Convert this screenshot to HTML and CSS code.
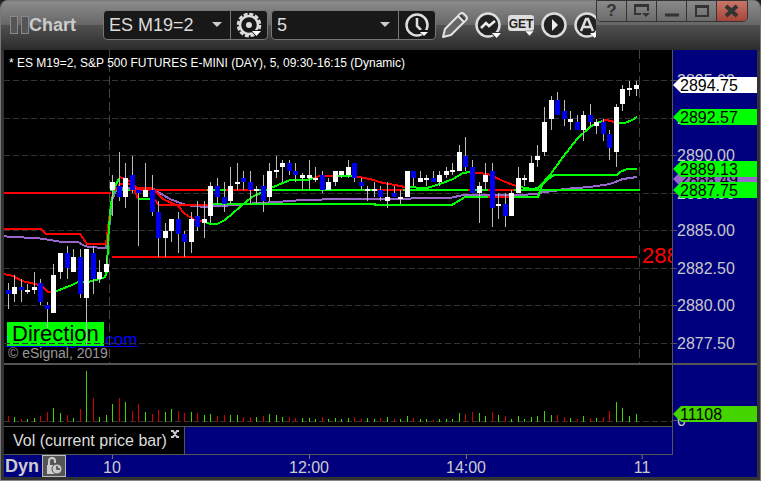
FILE: index.html
```html
<!DOCTYPE html>
<html lang="en">
  <head>
    <meta charset="UTF-8" />
    <meta name="viewport" content="width=device-width, initial-scale=1.0" />
    <title>Chart</title>
    <link rel="stylesheet" href="styles.css">
  </head>
  <body>
    <div class="window">
      <header class="toolbar">
        <span class="grip"></span>
        <h1 class="title">Chart</h1>

        <div class="combo symbol">
          <select aria-label="Symbol">
            <option>ES M19=2</option>
          </select>
          <button type="button" aria-label="Symbol settings">
            <svg width="28" height="28" viewBox="0 0 28 28">
              <circle cx="14" cy="14" r="11" fill="none" stroke="#ddd" stroke-width="2.5" stroke-dasharray="4 1.76" />
              <circle cx="14" cy="14" r="9" fill="none" stroke="#ddd" stroke-width="2.5" />
              <circle cx="14" cy="14" r="3" fill="#ddd" />
              <path d="M15 19h13l-6 8z" fill="#181818" />
              <path d="M17 20h9l-4.500 5z" fill="#fff" />
            </svg>
          </button>
        </div>

        <div class="combo interval">
          <select aria-label="Interval">
            <option>5</option>
          </select>
          <button type="button" aria-label="Time template">
            <svg width="28" height="28" viewBox="0 0 28 28">
              <circle cx="14" cy="14" r="10.5" fill="none" stroke="#ddd" stroke-width="2.5" />
              <path d="M14 7v8l4 4" fill="none" stroke="#ddd" stroke-width="2.5" />
              <path d="M15 19h13l-6 8z" fill="#181818" />
              <path d="M17 21h8l-4 4z" fill="#fff" />
            </svg>
          </button>
        </div>

        <div class="tools">
          <button type="button" aria-label="Draw">
            <svg width="28" height="28" viewBox="0 0 28 28">
              <path d="M1 26l2-8L18 3q2-2 4 0l2 2q2 2 0 4L9 24z" fill="#666" stroke="#e4e4e4" stroke-width="2" stroke-linejoin="round" />
              <path d="M16 5l6 6" stroke="#e4e4e4" stroke-width="2" />
              <path d="M18 4l5 5" stroke="#333" stroke-width="1.5" />
            </svg>
          </button>
          <button type="button" aria-label="Studies">
            <svg width="28" height="28" viewBox="0 0 28 28">
              <circle cx="13" cy="14" r="11.5" fill="#222" stroke="#ddd" stroke-width="2.5" />
              <path d="M6 17l5-5 3 3 6-5" fill="none" stroke="#eee" stroke-width="2.5" />
              <path d="M15 21h12l-6 7z" fill="#333" />
              <path d="M17 22h9l-4.500 5z" fill="#fff" />
            </svg>
          </button>
          <button type="button" aria-label="GET studies">
            <svg width="28" height="28" viewBox="0 0 28 28">
              <rect x="0" y="4" width="26" height="16" rx="3" fill="#ddd" />
              <text x="13" y="17" class="get-text">GET</text>
              <path d="M17 20h9l-4.500 5z" fill="#fff" stroke="#444" stroke-width=".5" />
            </svg>
          </button>
          <button type="button" aria-label="Play">
            <svg width="28" height="28" viewBox="0 0 28 28">
              <circle cx="13" cy="14" r="11.500" fill="#222" stroke="#ddd" stroke-width="2.500" />
              <path d="M11 8l6 6-6 6z" fill="#eee" />
            </svg>
          </button>
          <button type="button" aria-label="Alerts">
            <svg width="28" height="28" viewBox="0 0 28 28">
              <circle cx="13" cy="14" r="11.500" fill="#222" stroke="#ddd" stroke-width="2.500" />
              <path d="M7 20l5-12h2l5 12M9 16h8" fill="none" stroke="#ddd" stroke-width="2.500" />
              <path d="M16 22h9l-4.500 5z" fill="#fff" />
            </svg>
          </button>
        </div>

        <div class="window-buttons">
          <button type="button" aria-label="Help">?</button>
          <button type="button" aria-label="Pin">
            <svg width="16" height="14" viewBox="0 0 16 14">
              <path d="M7 10H1V1h13v6M1 2h13" fill="none" stroke="#333" stroke-width="2" />
              <path d="M8 9h8l-4 4z" fill="#333" />
            </svg>
          </button>
          <button type="button" aria-label="Minimize">
            <svg width="16" height="14" viewBox="0 0 16 14">
              <path d="M1 11h14" stroke="#333" stroke-width="3" />
            </svg>
          </button>
          <button type="button" aria-label="Maximize">
            <svg width="16" height="14" viewBox="0 0 16 14">
              <path d="M2 2h12v10H2zM2 3h12" fill="none" stroke="#333" stroke-width="2" />
            </svg>
          </button>
          <button type="button" class="close" aria-label="Close">
            <svg width="16" height="14" viewBox="0 0 16 14">
              <path d="M2 2l11 10M13 2L2 12" stroke="#333" stroke-width="4" />
            </svg>
          </button>
        </div>
      </header>

      <main class="chart">
        <section class="price-pane">
          <a class="site-link" href="#">www.esignal.com</a>
          <span class="direction">Direction</span>
          <svg class="plot" id="pricePlot" viewBox="0 50 668 313" preserveAspectRatio="none"></svg>
          <p class="heading">* ES M19=2, S&amp;P 500 FUTURES E-MINI (DAY), 5, 09:30-16:15 (Dynamic)</p>
          <span class="low-label">2883.25</span>
          <span class="copyright">© eSignal, 2019</span>
        </section>
        <aside class="axis price-axis" id="priceAxis"></aside>

        <div class="divider"></div>

        <section class="volume-pane">
          <svg class="plot" id="volumePlot" viewBox="0 365 668 61" preserveAspectRatio="none"></svg>
        </section>
        <aside class="axis volume-axis">
          <span class="axis-label zero">0</span>
          <span class="tag volume">11108</span>
        </aside>

        <div class="tabs">
          <div class="tab">
            <span>Vol (current price bar)</span>
            <button type="button" aria-label="Close tab">
              <svg width="10" height="8" viewBox="0 0 10 8">
                <path d="M1 1h2l4 6h2M9 1H7L3 7H1" fill="none" stroke="#ccc" stroke-width="2" />
              </svg>
            </button>
          </div>
        </div>
        <div class="axis"></div>

        <footer class="time-axis">
          <strong>Dyn</strong>
          <button type="button" aria-label="Lock time range">
            <svg width="22" height="20" viewBox="0 0 22 20">
              <path d="M6 9V5q0-3 3-3t3 3v2" fill="none" stroke="#ccc" stroke-width="2" />
              <path d="M4 9h9v9H4z" fill="#ccc" />
              <circle cx="14" cy="13" r="5" fill="#ccc" stroke="#555" />
              <path d="M14 10v3h3" fill="none" stroke="#444" stroke-width="1.500" />
            </svg>
          </button>
          <div class="times" id="times"></div>
        </footer>
      </main>
    </div>

    <script src="chart.js"></script>
  </body>
</html>
```
FILE: styles.css
```css
* {
  box-sizing: border-box;
}

body {
  margin: 0;
  background-color: #222;
  font-family: "Liberation Sans", Arial, sans-serif;
}

button {
  border: none;
  padding: 0;
  background: none;
  cursor: pointer;
}

svg {
  display: block;
}

.window {
  display: flex;
  flex-direction: column;
  height: 100vh;
  border: 1px solid #777;
  border-top: none;
  border-bottom-color: #888;
  border-radius: 8px 8px 0 0;
  overflow: hidden;
  background-color: #333;
}

/* toolbar */
.toolbar {
  display: flex;
  align-items: center;
  flex-shrink: 0;
  height: 50px;
  padding-left: 9px;
  background: linear-gradient(#777 0, #8a8a8a 4%, #666 50%, #505050 51%, #2b2b2b 100%);
}

.grip {
  display: flex;
  gap: 3px;
  margin-right: 4px;
}

.grip::before,
.grip::after {
  content: "";
  width: 6px;
  height: 16px;
  border: 1px solid #888;
  background-color: #555;
}

.title {
  width: 74px;
  margin: 0 0 0 -4px;
  font-size: 18px;
  color: #ccc;
}

.combo {
  position: relative;
  display: flex;
  height: 30px;
  margin-right: 3px;
  border: 1px solid #777;
  border-radius: 4px;
  background-color: #181818;
}

.combo select {
  width: 127px;
  padding: 0 5px;
  border: none;
  border-right: 1px solid #777;
  appearance: none;
  background: none;
  color: #ddd;
  font: 18px "Liberation Sans", Arial, sans-serif;
}

.combo::after {
  content: "";
  position: absolute;
  top: 11px;
  left: 108px;
  border: 5px solid transparent;
  border-top-color: #ccc;
  border-bottom: none;
  pointer-events: none;
}

.combo button {
  display: grid;
  place-items: center;
  width: 36px;
}

.tools {
  display: flex;
  gap: 5px;
  flex: 1;
  min-width: 0;
  margin-left: 3px;
  overflow: hidden;
}

.tools button {
  flex-shrink: 0;
}

.get-text {
  font: bold 12px "Liberation Sans", Arial, sans-serif;
  text-anchor: middle;
  fill: #222;
}

.window-buttons {
  display: flex;
  align-self: flex-start;
  flex-shrink: 0;
  height: 22px;
  margin-right: 12px;
  border: 1px solid #333;
  border-radius: 0 0 5px 5px;
  overflow: hidden;
}

.window-buttons button {
  display: grid;
  place-items: center;
  width: 30px;
  border-right: 1px solid #333;
  background: linear-gradient(#8a8a8a, #6c6c6c);
  color: #333;
  font: bold 17px "Liberation Sans", Arial, sans-serif;
}

.window-buttons .close {
  border-right: none;
  background: linear-gradient(#c8766a, #a84438);
}

/* chart */
.chart {
  flex: 1;
  display: grid;
  grid-template-columns: 1fr 85px;
  grid-template-rows: 1fr 2px 61px 29px 22px;
  min-height: 0;
  margin: 0 3px 3px;
  background-color: #00007f;
}

.price-pane,
.volume-pane {
  position: relative;
  min-height: 0;
  overflow: hidden;
  background-color: #000;
}

.plot {
  position: absolute;
  inset: 0;
  width: 100%;
  height: 100%;
  shape-rendering: crispEdges;
}

.heading {
  position: absolute;
  top: 5px;
  left: 5px;
  margin: 0;
  color: #fff;
  font-size: 12px;
  line-height: 16px;
}

.direction {
  position: absolute;
  bottom: 17px;
  left: 3px;
  padding: 0 5px;
  background-color: #00ff00;
  color: #000;
  font-size: 22px;
  line-height: 24px;
}

.site-link {
  position: absolute;
  bottom: 13px;
  left: 2px;
  color: #0000ff;
  font-size: 17px;
  line-height: 20px;
}

.copyright {
  position: absolute;
  bottom: 2px;
  left: 4px;
  color: #999;
  font-size: 14px;
  line-height: 16px;
}

.low-label {
  position: absolute;
  top: 194px;
  left: 638px;
  color: #ff0000;
  font-size: 22px;
  line-height: 24px;
}

.divider {
  grid-column: 1 / -1;
  background-color: #555;
}

.axis {
  position: relative;
  border-left: 1px solid #555;
}

.axis-label {
  position: absolute;
  left: 4px;
  color: #c8c8c8;
  font-size: 16px;
  line-height: 18px;
  transform: translateY(-50%);
}

.axis-label::before {
  content: "";
  position: absolute;
  top: 8px;
  left: -4px;
  width: 4px;
  height: 1px;
  background-color: #555;
}

.tag {
  position: absolute;
  left: 0;
  right: 0;
  height: 16px;
  padding-left: 7px;
  background-color: #00ff00;
  color: #000;
  font-size: 16px;
  line-height: 17px;
  clip-path: polygon(0 50%, 8px 0, 100% 0, 100% 100%, 8px 100%);
  transform: translateY(-50%);
}

.tag.last {
  background-color: #fff;
}

.tag.average {
  background-color: #9966cc;
}

.tag.volume {
  top: 49px;
  background-color: #44d400;
}

.axis-label.zero {
  top: 56px;
}

/* studies tab and time axis */
.tabs {
  display: flex;
  border-top: 1px solid #555;
  border-bottom: 1px solid #555;
}

.tab {
  display: flex;
  justify-content: space-between;
  align-items: center;
  width: 181px;
  padding: 0 4px 0 9px;
  border-right: 1px solid #555;
  background-color: #000;
  color: #ddd;
  font-size: 16px;
}

.tab button {
  align-self: flex-start;
  padding-top: 3px;
}

.time-axis {
  grid-column: 1 / -1;
  position: relative;
  display: flex;
  align-items: center;
  gap: 3px;
  padding-left: 1px;
  color: #ccc;
}

.time-axis strong {
  font-size: 18px;
}

.time-axis button {
  border: 1px solid #bbb;
  background-color: #555;
}

.times {
  position: absolute;
  inset: 0 85px 0 0;
  pointer-events: none;
}

.time {
  position: absolute;
  top: 4px;
  font-size: 16px;
  line-height: 18px;
  transform: translateX(-50%);
}

.time::before {
  content: "";
  position: absolute;
  top: -4px;
  left: 50%;
  width: 1px;
  height: 4px;
  background-color: #777;
}
```
FILE: chart.js
```js
const WIDTH = 668;
const HEIGHT = 313;
const TOP = 50;
const GREEN = "#00ff00";
const RED = "#ff0000";
const PURPLE = "#9966cc";

// high, body top, body bottom, low, rising (1) or falling (0), volume
const bars = [
  [283, 290, 294, 309, 0, 6], [275, 287, 294, 302, 1, 5], [279, 287, 290, 302, 0, 3],
  [284, 290, 292, 294, 1, 3], [272, 287, 290, 294, 1, 4], [279, 283, 302, 305, 0, 6],
  [302, 305, 309, 328, 0, 10], [264, 275, 313, 313, 1, 14], [253, 253, 272, 279, 1, 9],
  [246, 253, 268, 279, 0, 7], [249, 257, 272, 272, 1, 4], [249, 257, 294, 298, 0, 13],
  [249, 249, 298, 345, 1, 51], [246, 253, 279, 294, 0, 24], [260, 272, 279, 283, 1, 5],
  [257, 264, 272, 272, 1, 7], [175, 182, 190, 216, 1, 18], [152, 186, 197, 201, 0, 24],
  [163, 178, 197, 208, 1, 20], [156, 175, 190, 193, 0, 11], [190, 190, 193, 246, 0, 18],
  [163, 190, 197, 197, 1, 10], [175, 190, 212, 216, 0, 8], [201, 212, 238, 257, 0, 12],
  [223, 231, 238, 257, 1, 10], [219, 219, 231, 242, 1, 13], [212, 219, 234, 253, 0, 11],
  [231, 234, 242, 257, 0, 9], [212, 219, 242, 253, 1, 10], [201, 216, 227, 231, 0, 9],
  [201, 219, 223, 238, 1, 7], [182, 186, 216, 223, 1, 8], [178, 186, 197, 204, 0, 6],
  [182, 197, 204, 212, 0, 7], [167, 186, 201, 204, 1, 7], [163, 182, 184, 190, 1, 7],
  [171, 178, 182, 190, 0, 5], [171, 182, 190, 204, 0, 5], [186, 189, 191, 204, 1, 5],
  [175, 186, 201, 212, 0, 6], [163, 171, 197, 201, 1, 8], [156, 170, 172, 178, 1, 7],
  [160, 163, 167, 182, 1, 5], [160, 163, 171, 175, 0, 5], [163, 171, 175, 182, 0, 4],
  [173, 175, 178, 190, 1, 4], [160, 175, 178, 190, 1, 4], [167, 178, 180, 182, 1, 3],
  [171, 175, 190, 193, 0, 5], [178, 182, 190, 190, 1, 3], [171, 171, 182, 186, 1, 4],
  [171, 171, 175, 178, 1, 3], [160, 167, 175, 178, 1, 4], [163, 163, 178, 182, 0, 5],
  [178, 182, 186, 190, 0, 3], [186, 189, 191, 201, 1, 4], [182, 189, 191, 197, 1, 3],
  [186, 190, 197, 201, 0, 4], [182, 197, 201, 208, 1, 5], [186, 193, 197, 197, 0, 3],
  [190, 197, 199, 204, 1, 3], [171, 171, 197, 197, 1, 6], [171, 171, 178, 186, 0, 4],
  [171, 178, 182, 182, 1, 3], [175, 178, 180, 186, 1, 3], [171, 178, 182, 182, 0, 2],
  [171, 175, 182, 186, 1, 3], [167, 171, 175, 178, 1, 3], [163, 170, 172, 175, 1, 3],
  [145, 152, 171, 171, 1, 9], [137, 156, 167, 171, 0, 8], [160, 167, 193, 193, 0, 10],
  [182, 186, 193, 223, 1, 9], [163, 175, 182, 190, 1, 6], [163, 171, 208, 227, 0, 10],
  [193, 204, 206, 219, 1, 7], [193, 204, 216, 227, 0, 6], [190, 193, 216, 216, 1, 3],
  [167, 178, 193, 193, 1, 6], [175, 178, 180, 186, 1, 3], [156, 163, 182, 182, 1, 5],
  [145, 156, 160, 167, 1, 6], [107, 122, 152, 156, 1, 11], [96, 100, 119, 130, 1, 7],
  [92, 100, 115, 115, 0, 7], [100, 111, 119, 126, 0, 5], [111, 119, 122, 130, 1, 4],
  [115, 122, 130, 130, 0, 3], [111, 115, 130, 141, 1, 6], [104, 115, 122, 126, 0, 4],
  [119, 122, 126, 134, 1, 4], [119, 122, 134, 141, 0, 5], [130, 134, 148, 160, 0, 11],
  [104, 107, 152, 167, 1, 20], [85, 89, 104, 111, 1, 14], [81, 88, 90, 96, 1, 6],
  [81, 85, 89, 96, 1, 8],
];

const lines = [
  // volume weighted average
  [PURPLE, "0,236 6,237 33,238 46,240 58,242 74,242 79,245 84,247 102,248 105,230 108,200 113,188 148,188 154,192 166,199 179,204 188,206 203,207 216,206 233,205 253,203 276,202 283,201 301,200 336,199 398,199 416,198 446,198 459,195 516,195 533,194 539,192 551,191 559,189 586,187 606,184 619,179 633,177"],
  // day levels
  [RED, "0,193 107,193"],
  [RED, "108,257 633,257"],
  [RED, "106,190 203,190"],
  [GREEN, "106,190 126,190"],
  [GREEN, "203,190 636,190"],
  [RED, "222,190 252,190"],
  [RED, "258,190 268,190"],
  [RED, "369,190 399,190"],
  [RED, "464,190 470,190"],
  [RED, "484,190 510,190"],
  // stepped average
  [RED, "0,229 37,229 42,234 76,234 83,244 102,244 105,220 107,205 109,193 116,184 128,184 134,199"],
  [GREEN, "134,199 150,199"],
  [RED, "150,199 155,205 208,205"],
  [GREEN, "208,204 371,204 371,205 448,205 461,197 534,197 538,185 544,179 550,175 613,175 616,172 623,169 633,169"],
  [RED, "484,197 508,197"],
  // moving average
  [RED, "0,274 9,276 18,281 31,284 38,286 44,292 49,292"],
  [GREEN, "50,292 68,285 74,282 84,282 96,279 101,277 103,271 104,240 107,203 110,191 111,187 115,178"],
  [RED, "115,177 119,178 128,182 133,188 148,188 159,199 174,206 181,214 191,220 201,222"],
  [GREEN, "201,222 206,224 213,224 221,220 236,207 248,197 259,192 267,188 286,180 303,180 309,178"],
  [RED, "309,178 316,176 329,176"],
  [GREEN, "329,176 349,176"],
  [RED, "349,176 366,179 379,183 391,185 401,187"],
  [GREEN, "401,187 423,188 436,184 449,179 459,173 466,172"],
  [RED, "466,172 473,173 484,174 499,181 512,186"],
  [GREEN, "512,186 516,187 528,189 534,188 546,175 559,157 573,139 586,127 593,123 598,121"],
  [RED, "598,121 601,120 608,121 610,123"],
  [GREEN, "610,123 621,123 628,120 633,117"],
];

function barX(i) {
  return Math.floor(4.18 + 6.54 * i);
}

function priceY(price) {
  return Math.round(156 + (2890 - price) * 15);
}

function drawPrices() {
  let svg = "";
  for (let price = 2877.5; price <= 2895; price += 2.5) {
    svg += `<path d="M0 ${priceY(price) - 0.5}H${WIDTH}" stroke="#333" stroke-dasharray="6 3" />`;
  }
  [105.5, 635.5].forEach((x) => {
    svg += `<path d="M${x} 50V363" stroke="#444" stroke-dasharray="9 4" />`;
  });
  lines.forEach(([color, points]) => {
    svg += `<polyline points="${points}" fill="none" stroke="${color}" stroke-width="2" />`;
  });
  bars.forEach(([high, top, bottom, low, up], i) => {
    const x = barX(i);
    svg += `<rect x="${x}" y="${high}" width="1" height="${low - high}" fill="#bbb" />`;
    svg += `<rect x="${x - 2}" y="${top}" width="5" height="${bottom - top}" fill="${up ? "#fff" : "#0000f0"}" />`;
  });
  document.getElementById("pricePlot").innerHTML = svg;
}

function drawVolume() {
  let svg = `<path d="M0 421.5H${WIDTH}" stroke="#333" stroke-dasharray="6 3" />`;
  bars.forEach((bar, i) => {
    const color = bar[4] ? "#44d400" : "#d40000";
    svg += `<rect x="${barX(i)}" y="${422 - bar[5]}" width="1" height="${bar[5]}" fill="${color}" />`;
  });
  document.getElementById("volumePlot").innerHTML = svg;
}

function drawAxis() {
  let html = "";
  const top = (price) => ((priceY(price) - TOP) / HEIGHT) * 100;
  for (let price = 2895; price >= 2877.5; price -= 2.5) {
    html += `<span class="axis-label" style="top: ${top(price)}%">${price.toFixed(2)}</span>`;
  }
  [
    [2888.49, "average"],
    [2894.75, "last"],
    [2892.57, ""],
    [2889.13, ""],
    [2887.75, ""],
  ].forEach(([price, kind]) => {
    html += `<span class="tag ${kind}" style="top: ${top(price)}%">${price.toFixed(2)}</span>`;
  });
  document.getElementById("priceAxis").innerHTML = html;
}

function drawTimes() {
  document.getElementById("times").innerHTML = [
    ["10", 108],
    ["12:00", 305],
    ["14:00", 462],
    ["11", 638],
  ]
    .map(([text, x]) => `<span class="time" style="left: ${(x / WIDTH) * 100}%">${text}</span>`)
    .join("");
}

drawPrices();
drawVolume();
drawAxis();
drawTimes();
```
